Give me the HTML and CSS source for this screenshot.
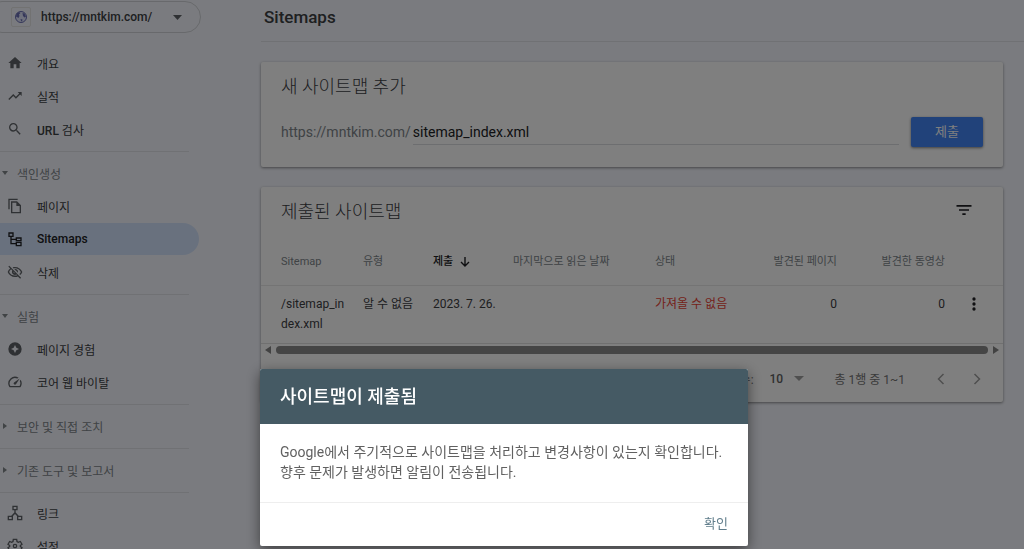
FILE: index.html
```html
<!DOCTYPE html>
<html lang="ko">
<head>
<meta charset="utf-8">
<meta name="viewport" content="width=device-width, initial-scale=1">
<title>Sitemaps</title>
<link rel="stylesheet" href="styles.css">
</head>
<body>
<div class="app">
  <aside class="sidebar">
    <button class="property" type="button">
      <span class="favicon">
        <svg width="14" height="14" viewBox="0 0 14 14"><circle cx="7" cy="7" r="5.500" fill="#dfe3fa" stroke="#6a6fb4"/><path d="M2.500 3.500 5 2l1.500 1L5 4.500 5.500 6 4.500 8 2 6.500ZM8.500 3l2 .5 1.500 3-1.500 1-1.500-1.500ZM6.500 9l2 .5-.5 2-1-.5Z" fill="#6a6fb4"/></svg>
      </span>
      <span class="property-name">https://mntkim.com/</span>
      <svg class="caret" width="9" height="5" viewBox="0 0 9 5"><path d="M0 0h9L4.500 5Z" fill="#5f6368"/></svg>
    </button>
    <nav class="nav">
      <div class="group">
        <a class="item" href="#overview"><svg viewBox="0 0 24 24"><path d="M10 20v-6h4v6h5v-8h3L12 3 2 12h3v8z"/></svg>개요</a>
        <a class="item" href="#performance"><svg viewBox="0 0 24 24"><path d="m16 6 2.290 2.290-4.880 4.880-4-4L2 16.590 3.410 18l6-6 4 4 6.300-6.290L22 12V6z"/></svg>실적</a>
        <a class="item" href="#inspect"><svg viewBox="0 0 24 24"><path d="M15.500 14h-.79l-.28-.27A6.470 6.470 0 0 0 16 9.500 6.500 6.500 0 1 0 9.500 16c1.610 0 3.090-.59 4.230-1.570l.27.28v.79l5 4.990L20.490 19l-4.990-5zm-6 0C7.010 14 5 11.990 5 9.500S7.010 5 9.500 5 14 7.010 14 9.500 11.990 14 9.500 14z"/></svg><span><span class="latin">URL</span> 검사</span></a>
      </div>
      <div class="group">
        <button class="heading" type="button"><svg viewBox="0 0 8 8"><path d="M1 2h6L4 6z"/></svg>색인생성</button>
        <a class="item" href="#pages"><svg viewBox="0 0 24 24"><path d="M16 1H2v16h2V3h12V1zm-1 4H6v18h15V11l-6-6zM8 21V7h6v5h5v9H8z"/></svg>페이지</a>
        <a class="item selected" href="#sitemaps" aria-current="page"><svg viewBox="0 0 24 24"><path d="M2 2h8v7H7v2.500h6V9.500h9v6h-9v-2H7V18h6v-2h9v7h-9v-3H5V9H2zm2 2v3h4V4zm11 7.500v2h5v-2zm0 6.500v3h5v-3z"/></svg><span class="latin">Sitemaps</span></a>
        <a class="item" href="#removals"><svg viewBox="0 0 24 24"><path d="M12 6.500c3.800 0 7.200 2.100 8.800 5.500-.6 1.200-1.400 2.300-2.400 3.100l1.400 1.400A11.800 11.800 0 0 0 23 12C21.300 7.600 17 4.500 12 4.500c-1.300 0-2.500.2-3.600.6l1.600 1.600c.7-.1 1.300-.2 2-.2zm-1.100 1.100L13 9.700c.6.300 1 .7 1.300 1.300l2.100 2.100c.1-.4.1-.7.1-1.100A4.500 4.500 0 0 0 12 7.500c-.4 0-.7 0-1.100.1zM2 3.900l2.700 2.700A11.800 11.800 0 0 0 1 12c1.700 4.400 6 7.500 11 7.500 1.500 0 3-.3 4.300-.8l3.400 3.400 1.400-1.400L3.400 2.500zm7.500 7.500 2.600 2.600H12a2.500 2.500 0 0 1-2.500-2.600zM6.100 8l1.800 1.800A4.500 4.500 0 0 0 12 16.500c.8 0 1.500-.2 2.200-.6l1 1c-1 .3-2.100.5-3.200.5-3.800 0-7.200-2-8.800-5.400A9 9 0 0 1 6.100 8z"/></svg>삭제</a>
      </div>
      <div class="group">
        <button class="heading" type="button"><svg viewBox="0 0 8 8"><path d="M1 2h6L4 6z"/></svg>실험</button>
        <a class="item" href="#page-experience"><svg viewBox="0 0 24 24"><path fill-rule="evenodd" d="M12 2a10 10 0 1 0 0 20 10 10 0 0 0 0-20zm0 4 2 4 4 2-4 2-2 4-2-4-4-2 4-2z"/></svg>페이지 경험</a>
        <a class="item" href="#vitals"><svg viewBox="0 0 24 24"><path d="m20.380 8.570-1.230 1.850a8 8 0 0 1-.22 7.580H5.070A8 8 0 0 1 15.580 6.850l1.850-1.230A10 10 0 0 0 3.350 19a2 2 0 0 0 1.720 1h13.850a2 2 0 0 0 1.740-1 10 10 0 0 0-.27-10.440zM10.590 15.410a2 2 0 0 0 2.830 0l5.660-8.490-8.490 5.660a2 2 0 0 0 0 2.830z"/></svg>코어 웹 바이탈</a>
      </div>
      <div class="group">
        <button class="heading" type="button"><svg viewBox="0 0 8 8"><path d="M2 1v6l4-3z"/></svg>보안 및 직접 조치</button>
      </div>
      <div class="group">
        <button class="heading" type="button"><svg viewBox="0 0 8 8"><path d="M2 1v6l4-3z"/></svg>기존 도구 및 보고서</button>
      </div>
      <div class="group">
        <a class="item" href="#links"><svg viewBox="0 0 24 24"><path d="M8 1h8v7h-3v3.200l4.600 4.800H23v7h-8v-6.500l-3-3.100-3 3.100V23H1v-7h5.400l4.600-4.800V8H8zm2 2v3h4V3zM3 18v3h4v-3zm14 0v3h4v-3z"/></svg>링크</a>
        <a class="item" href="#settings"><svg viewBox="0 0 24 24" class="gear"><path d="m9.500 2-.5 3.200-2 1.200-3-1.200-2.500 4.200L4 11.300v1.400l-2.500 1.900L4 18.800l3-1.200 2 1.200.5 3.200h5l.5-3.200 2-1.200 3 1.200 2.500-4.200-2.500-1.900v-1.400l2.500-1.900L20 5.200l-3 1.200-2-1.200-.5-3.200z"/><circle cx="12" cy="12" r="2.500"/></svg>설정</a>
      </div>
    </nav>
  </aside>

  <main class="main">
    <h1 class="page-title">Sitemaps</h1>
    <div class="content">
      <section class="card">
        <h2 class="card-title">새 사이트맵 추가</h2>
        <form class="add-form">
          <label class="prefix" for="sitemap-url">https://mntkim.com/</label>
          <input class="url-input" id="sitemap-url" type="text" value="sitemap_index.xml">
          <button class="submit" type="button">제출</button>
        </form>
      </section>

      <section class="card">
        <div class="card-head">
          <h2 class="card-title">제출된 사이트맵</h2>
          <button class="icon-button" type="button" aria-label="필터"><svg width="20" height="20" viewBox="0 0 24 24"><path d="M10 18h4v-2h-4v2zM3 6v2h18V6H3zm3 7h12v-2H6v2z"/></svg></button>
        </div>
        <table class="table">
          <colgroup><col class="c-path"><col class="c-type"><col class="c-date"><col class="c-read"><col class="c-state"><col class="c-pages"><col class="c-videos"><col class="c-menu"></colgroup>
          <thead>
            <tr><th>Sitemap</th><th>유형</th><th class="sorted"><span class="sort">제출<svg width="10" height="10" viewBox="0 0 10 10"><path d="M5 0v9M1 5l4 4 4-4"/></svg></span></th><th>마지막으로 읽은 날짜</th><th>상태</th><th class="num">발견된 페이지</th><th class="num">발견한 동영상</th><th></th></tr>
          </thead>
          <tbody>
            <tr><td class="path">/sitemap_index.xml</td><td>알 수 없음</td><td>2023. 7. 26.</td><td></td><td class="error">가져올 수 없음</td><td class="num">0</td><td class="num">0</td><td class="menu"><button class="icon-button" type="button" aria-label="더보기"><svg width="20" height="20" viewBox="0 0 24 24"><circle cx="12" cy="6" r="2"/><circle cx="12" cy="12" r="2"/><circle cx="12" cy="18" r="2"/></svg></button></td></tr>
          </tbody>
        </table>
        <div class="scrollbar">
          <svg width="6" height="8" viewBox="0 0 6 8"><path d="M6 0v8L0 4z"/></svg>
          <span class="thumb"></span>
          <svg width="6" height="8" viewBox="0 0 6 8"><path d="M0 0v8l6-4z"/></svg>
        </div>
        <div class="pager">
          <label for="rows">페이지당 행 수:</label>
          <span class="rows">
            <select id="rows"><option>10</option></select>
            <svg width="10" height="5" viewBox="0 0 10 5"><path d="M0 0h10L5 5z"/></svg>
          </span>
          <span class="range">총 1행 중 1~1</span>
          <button class="step" type="button" aria-label="이전"><svg width="8" height="12" viewBox="0 0 8 12"><path d="M6.500 1 1.500 6l5 5"/></svg></button>
          <button class="step" type="button" aria-label="다음"><svg width="8" height="12" viewBox="0 0 8 12"><path d="m1.500 1 5 5-5 5"/></svg></button>
        </div>
      </section>
    </div>
  </main>
</div>

<div class="scrim">
  <div class="dialog" role="dialog" aria-modal="true" aria-labelledby="dialog-title">
    <h2 class="dialog-title" id="dialog-title">사이트맵이 제출됨</h2>
    <p class="dialog-text">Google에서 주기적으로 사이트맵을 처리하고 변경사항이 있는지 확인합니다. 향후 문제가 발생하면 알림이 전송됩니다.</p>
    <div class="dialog-actions"><button class="confirm" type="button">확인</button></div>
  </div>
</div>
</body>
</html>
```

FILE: styles.css
```css
* { box-sizing: border-box; }

body {
  margin: 0;
  height: 100vh;
  overflow: hidden;
  background: #f5f7fe;
  color: #3c4043;
  font-family: Roboto, "Noto Sans CJK KR", sans-serif;
  font-size: 12px;
}

button, input, select {
  margin: 0;
  padding: 0;
  border: 0;
  background: none;
  color: inherit;
  font: inherit;
}

h1, h2, p { margin: 0; }
svg { display: block; flex: none; }

.app {
  display: flex;
  height: 100vh;
  overflow: hidden;
}

/* Sidebar */
.sidebar {
  flex: none;
  width: 201px;
  padding-top: 1px;
}

.property {
  display: flex;
  align-items: center;
  width: 215px;
  height: 32px;
  margin-left: -14px;
  padding: 0 18px 0 24px;
  border: 1px solid #d0d3d8;
  border-radius: 16px;
  font-weight: 500;
}

.favicon {
  display: flex;
  align-items: center;
  justify-content: center;
  width: 20px;
  height: 20px;
  border: 1px solid #e4e4e4;
  border-radius: 2px;
}

.property-name { margin-left: 10px; }
.caret { margin-left: auto; }

.nav { padding-top: 14px; }

.group { display: flex; flex-direction: column; }

.group + .group::before {
  content: "";
  width: 189px;
  height: 1px;
  margin: 5px 0 4px;
  background: #e1e3e8;
}

.item, .heading {
  display: flex;
  align-items: center;
  width: 199px;
  height: 32px;
  margin-bottom: 1px;
}

.item {
  gap: 14px;
  padding-left: 7px;
  border-radius: 0 16px 16px 0;
  color: #3c4043;
  text-decoration: none;
}

.item svg { width: 16px; height: 16px; fill: #5f6368; }
.item .gear { fill: none; stroke: #5f6368; stroke-width: 2; }
.item.selected { background: #d3e3fd; color: #202124; }
.selected svg { fill: #202124; }
.latin { font-weight: 500; }

.heading {
  height: 34px;
  margin-bottom: 0;
  gap: 8px;
  padding-left: 1px;
  color: #80868b;
}

.heading svg { width: 8px; height: 8px; fill: #80868b; }

/* Main column */
.main {
  flex: 1;
  min-width: 0;
  margin-left: 60px;
}

.page-title {
  height: 42px;
  padding: 4px 3px 0;
  border-bottom: 1px solid #e1e3e8;
  font-size: 17px;
  font-weight: 500;
  line-height: 26px;
}

.content {
  display: flex;
  flex-direction: column;
  gap: 20px;
  padding: 20px 21px 0 0;
}

.card {
  border-radius: 2px;
  background: #fff;
  box-shadow: 0 1px 3px rgba(0, 0, 0, .45);
}

.card-title {
  padding: 12px 20px 0;
  font-size: 18px;
  font-weight: 300;
  line-height: 26px;
}

.add-form {
  display: flex;
  align-items: center;
  padding: 17px 20px 20px;
  font-size: 14px;
}

.prefix { color: #80868b; }

.url-input {
  flex: 1;
  min-width: 0;
  height: 26px;
  margin: 0 12px 0 2px;
  border-bottom: 1px solid #dadce0;
  color: #202124;
}

.submit {
  width: 72px;
  height: 30px;
  padding-bottom: 3px;
  border-radius: 2px;
  background: #4285f4;
  box-shadow: 0 1px 3px rgba(0, 0, 0, .5);
  color: #fff;
  font-size: 13px;
}

.card-head {
  display: flex;
  align-items: flex-start;
  justify-content: space-between;
  padding-right: 29px;
}

.card-head .icon-button { margin-top: 13px; }
.icon-button svg { fill: #202124; }

.table {
  width: 100%;
  border-collapse: collapse;
  table-layout: fixed;
  line-height: 20px;
}

.c-path { width: 92px; }
.c-type { width: 70px; }
.c-date { width: 80px; }
.c-read { width: 142px; }
.c-state { width: 110px; }
.c-pages { width: 92px; }
.c-videos { width: 108px; }
.c-menu { width: 48px; }

.table th {
  height: 60px;
  padding: 14px 10px 0;
  color: #80868b;
  font-size: 11px;
  font-weight: 400;
  text-align: left;
  white-space: nowrap;
}

.table td {
  height: 58px;
  padding: 8px 10px 0;
  border-top: 1px solid #e8e8e8;
  border-bottom: 1px solid #e0e0e0;
  vertical-align: top;
  white-space: nowrap;
}

.table th:first-child, .table td:first-child { padding-left: 20px; }
.table .path { padding-right: 4px; white-space: normal; word-break: break-all; }
.table .num { padding-left: 0; text-align: right; }
.table .error { color: #ea4335; }
.table .menu { padding: 8px 0 0 9px; }
.table .sorted { color: #202124; font-weight: 500; }

.sort { display: flex; align-items: center; gap: 7px; }
.sort svg { fill: none; stroke: #202124; stroke-width: 1.4; }

.scrollbar {
  display: flex;
  align-items: center;
  gap: 5px;
  height: 12px;
  padding: 0 4px;
}

.scrollbar svg { fill: #858585; }
.thumb { flex: 1; height: 8px; border-radius: 4px; background: #8b8b8b; }

.pager {
  display: flex;
  align-items: center;
  justify-content: flex-end;
  height: 46px;
  padding-right: 22px;
  color: #757575;
}

.rows { display: flex; align-items: center; margin: 0 31px 0 16px; }
.rows select { width: 24px; appearance: none; color: #616161; font-weight: 500; }
.rows svg { fill: #9e9e9e; }
.range { margin-right: 32px; }
.step + .step { margin-left: 28px; }
.step svg { fill: none; stroke: #9e9e9e; stroke-width: 1.5; }

/* Confirmation dialog */
.scrim {
  position: fixed;
  inset: 0;
  display: flex;
  align-items: flex-end;
  padding: 0 20px 3px 260px;
  background: rgba(0, 0, 0, .5);
}

.dialog {
  width: 488px;
  border-radius: 2px;
  overflow: hidden;
  background: #fff;
  box-shadow: 0 4px 14px rgba(0, 0, 0, .5);
}

.dialog-title {
  padding: 15px 20px 14px;
  background: #455a64;
  color: #fff;
  font-size: 18px;
  font-weight: 500;
  line-height: 26px;
}

.dialog-text {
  padding: 18px 20px 20px;
  color: #616161;
  font-size: 14px;
  line-height: 20px;
}

.dialog-actions {
  display: flex;
  justify-content: flex-end;
  padding: 10px 20px 11px;
  border-top: 1px solid #eee;
}

.confirm {
  color: #607d8b;
  font-size: 13px;
  line-height: 22px;
}
```
